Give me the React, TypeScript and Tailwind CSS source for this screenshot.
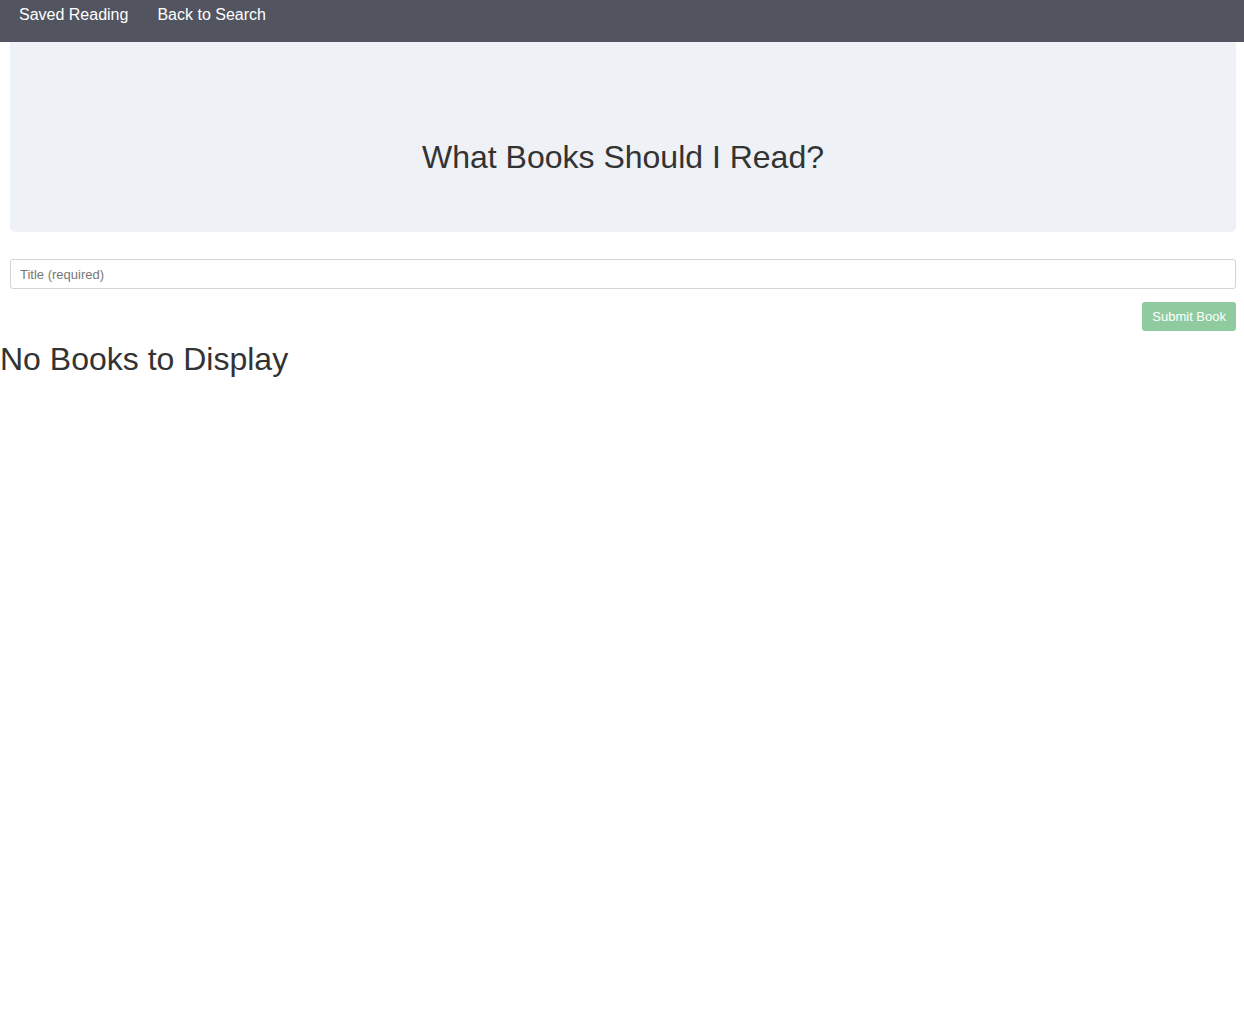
import React from 'react';

const App: React.FC = () => {
  return (
    <div className="min-h-screen bg-white text-[#333] font-['Liberation_Sans',Arial,sans-serif]">
      <nav className="h-[42px] bg-[#525560] flex items-start">
        <a href="#" className="ml-[19px] mt-[5px] text-[16px] leading-[20px] text-white">
          Saved Reading
        </a>
        <a href="#" className="ml-[29px] mt-[5px] text-[16px] leading-[20px] text-white">
          Back to Search
        </a>
      </nav>

      <div className="pl-[10px] pr-[8px]">
        <div className="h-[190px] bg-[#eef1f5] rounded-b-[5px] flex items-center justify-center">
          <h1 className="text-[32px] leading-[36px] pt-[44px] pb-[5px] text-[#333]">What Books Should I Read?</h1>
        </div>

        <form className="mt-[27px]" onSubmit={(e) => e.preventDefault()}>
          <input
            type="text"
            placeholder="Title (required)"
            className="w-full h-[30px] px-[9px] text-[13px] border border-[#d4d4d4] rounded-[3px] placeholder:text-[#777] outline-none"
          />
          <div className="flex justify-end mt-[13px]">
            <button
              type="submit"
              className="h-[29px] px-[10px] rounded-[3px] bg-[#8fcb9e] text-white text-[13px]"
            >
              Submit Book
            </button>
          </div>
        </form>
      </div>

      <h2 className="mt-[10px] text-[32px] leading-[36px] text-[#333]">No Books to Display</h2>
    </div>
  );
};

export default App;
